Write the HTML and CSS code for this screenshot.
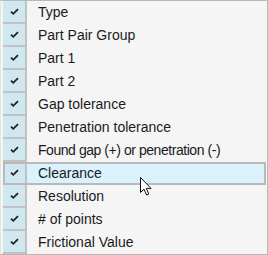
FILE: index.html
```html
<!DOCTYPE html>
<html lang="en">
<head>
    <meta charset="UTF-8">
    <title>Columns</title>
    <link rel="stylesheet" href="styles.css">
</head>
<body>
    <div class="column-list">
        <div class="row"><span class="check"><svg viewBox="0 0 10 8"><path d="M1 4.2 L3.6 6.6 L9 1.2"/></svg></span><span class="label">Type</span></div>
        <div class="row"><span class="check"><svg viewBox="0 0 10 8"><path d="M1 4.2 L3.6 6.6 L9 1.2"/></svg></span><span class="label">Part Pair Group</span></div>
        <div class="row"><span class="check"><svg viewBox="0 0 10 8"><path d="M1 4.2 L3.6 6.6 L9 1.2"/></svg></span><span class="label">Part 1</span></div>
        <div class="row"><span class="check"><svg viewBox="0 0 10 8"><path d="M1 4.2 L3.6 6.6 L9 1.2"/></svg></span><span class="label">Part 2</span></div>
        <div class="row"><span class="check"><svg viewBox="0 0 10 8"><path d="M1 4.2 L3.6 6.6 L9 1.2"/></svg></span><span class="label">Gap tolerance</span></div>
        <div class="row"><span class="check"><svg viewBox="0 0 10 8"><path d="M1 4.2 L3.6 6.6 L9 1.2"/></svg></span><span class="label">Penetration tolerance</span></div>
        <div class="row"><span class="check"><svg viewBox="0 0 10 8"><path d="M1 4.2 L3.6 6.6 L9 1.2"/></svg></span><span class="label tight">Found gap (+) or penetration (-)</span></div>
        <div class="row active"><span class="check"><svg viewBox="0 0 10 8"><path d="M1 4.2 L3.6 6.6 L9 1.2"/></svg></span><span class="label">Clearance</span></div>
        <div class="row"><span class="check"><svg viewBox="0 0 10 8"><path d="M1 4.2 L3.6 6.6 L9 1.2"/></svg></span><span class="label">Resolution</span></div>
        <div class="row"><span class="check"><svg viewBox="0 0 10 8"><path d="M1 4.2 L3.6 6.6 L9 1.2"/></svg></span><span class="label"># of points</span></div>
        <div class="row"><span class="check"><svg viewBox="0 0 10 8"><path d="M1 4.2 L3.6 6.6 L9 1.2"/></svg></span><span class="label">Frictional Value</span></div>

        <!-- mouse pointer over the hovered row -->
        <svg class="cursor" viewBox="0 0 12 19">
            <path d="M0.5 0.5 L0.5 15.5 L4 12.2 L6.6 18 L8.8 17 L6.3 11.4 L11 11.4 Z"/>
        </svg>
    </div>
</body>
</html>
```

FILE: styles.css
```css
:root {
    --frame: #b9b9b9;
    --panel: #f5f5f5;
    --check-bg: #cfe8f0;
    --check-line: #c2c2c2;
    --hover-bg: #d9f2fc;
    --text: #1b1b1b;
}

body {
    margin: 0;
    font-family: 'Liberation Sans', Arial, sans-serif;
}

.column-list {
    position: relative;
    width: 268px;
    height: 255px;
    box-sizing: border-box;
    border: 1px solid var(--frame);
    border-left-color: #e4e4e4;
    background-color: var(--panel);
    padding-left: 2px;
}

.row {
    display: flex;
    align-items: stretch;
    height: 23px;
    margin-right: 1px;
}

.check {
    display: flex;
    align-items: center;
    justify-content: center;
    width: 24px;
    flex-shrink: 0;
    background-color: var(--check-bg);
    border-bottom: 2px solid var(--check-line);
    border-right: 2px solid var(--check-line);
    box-sizing: border-box;
}

.check svg {
    width: 9px;
    height: 7px;
    margin-left: 1px;
}

.check path {
    fill: none;
    stroke: #202020;
    stroke-width: 2;
}

.label {
    display: flex;
    align-items: center;
    padding-left: 11px;
    padding-bottom: 1px;
    font-size: 14px;
    color: var(--text);
    white-space: nowrap;
}

/* the long caption is set a little tighter, as in the source grid */
.label.tight {
    letter-spacing: -0.45px;
}

.row.active {
    background-color: var(--hover-bg);
    outline: 2px solid var(--frame);
    outline-offset: -2px;
}

.cursor {
    position: absolute;
    left: 139px;
    top: 176px;
    width: 12px;
    height: 19px;
}

.cursor path {
    fill: #ffffff;
    stroke: #111111;
    stroke-width: 1;
    stroke-linejoin: miter;
}
```
